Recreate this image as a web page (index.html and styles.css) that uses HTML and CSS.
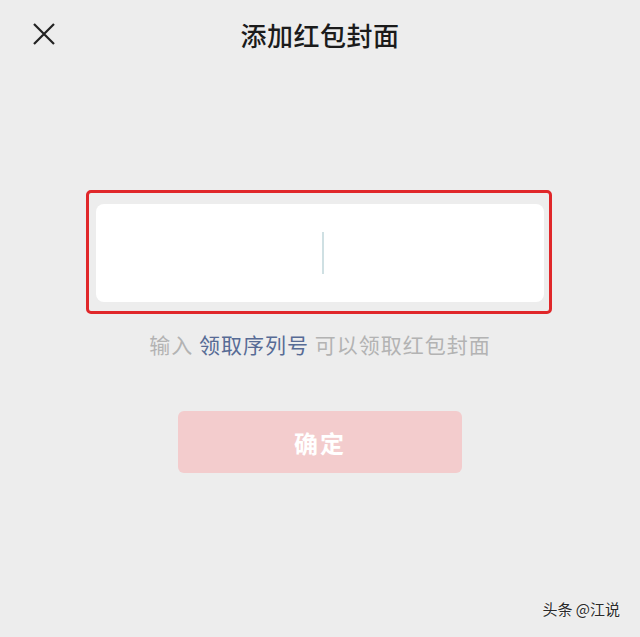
FILE: index.html
```html
<!DOCTYPE html>
<html lang="zh-CN">
<head>
    <meta charset="UTF-8">
    <meta name="viewport" content="width=device-width, initial-scale=1.0">
    <title>添加红包封面</title>
    <link rel="stylesheet" href="styles.css">
</head>
<body>
    <div class="page">
        <header class="top-bar">
            <button class="close-btn" aria-label="关闭">
                <svg width="24" height="24" viewBox="0 0 24 24">
                    <path d="M2 2 L22 22 M22 2 L2 22" stroke="#222" stroke-width="2.2" fill="none"/>
                </svg>
            </button>
            <h1 class="title">添加红包封面</h1>
        </header>

        <div class="input-frame">
            <div class="input-box">
                <span class="cursor"></span>
            </div>
        </div>

        <p class="hint">输入 <span class="link">领取序列号</span> 可以领取红包封面</p>

        <button class="confirm-btn">确定</button>

        <div class="watermark">头条 @江说</div>
    </div>
</body>
</html>
```

FILE: styles.css
```css
* {
    margin: 0;
    padding: 0;
    box-sizing: border-box;
}

body {
    font-family: "Noto Sans CJK SC", "Noto Sans", sans-serif;
    background: #ededed;
    width: 640px;
    height: 637px;
    overflow: hidden;
}

.page {
    position: relative;
    height: 637px;
    display: flex;
    flex-direction: column;
    align-items: center;
}

.top-bar {
    position: relative;
    width: 100%;
    height: 68px;
    display: flex;
    align-items: center;
    justify-content: center;
}

.close-btn {
    position: absolute;
    left: 32px;
    top: 22px;
    width: 24px;
    height: 24px;
    border: none;
    background: none;
    display: flex;
}

.title {
    font-size: 26px;
    font-weight: 500;
    color: #1b1b1b;
    letter-spacing: 0.5px;
}

.input-frame {
    margin-top: 122px;
    margin-left: -2px;
    width: 466px;
    height: 124px;
    border: 3px solid #e0272a;
    border-radius: 5px;
    padding: 11px 5px 9px 7px;
}

.input-box {
    width: 100%;
    height: 100%;
    background: #fff;
    border-radius: 8px;
    display: flex;
    align-items: center;
    justify-content: center;
}

.cursor {
    display: block;
    width: 2px;
    height: 42px;
    background: #cfe0e3;
    margin-left: 6px;
    margin-top: 0;
}

.hint {
    margin-top: 15px;
    font-size: 21px;
    color: #b3b3b3;
    letter-spacing: 1px;
}

.link {
    color: #576b95;
}

.confirm-btn {
    margin-top: 52px;
    width: 284px;
    height: 62px;
    border: none;
    border-radius: 6px;
    background: #f3cccd;
    color: #fff;
    font-family: inherit;
    font-size: 24px;
    font-weight: 700;
    letter-spacing: 2px;
}

.watermark {
    position: absolute;
    right: 20px;
    bottom: 18px;
    font-size: 15px;
    color: #2a2a2a;
    text-shadow: 0 0 2px #fff;
}
```
